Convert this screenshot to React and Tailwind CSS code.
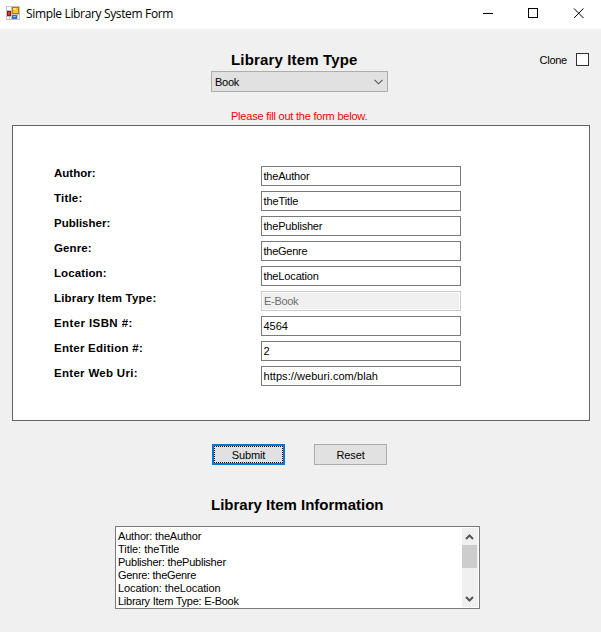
import React from "react";

const fields = [
  { label: "Author:", value: "theAuthor", lt: "tracking-[0px]", vt: "tracking-[-0.2px]" },
  { label: "Title:", value: "theTitle", lt: "tracking-[0.2px]", vt: "tracking-[-0.1px]" },
  { label: "Publisher:", value: "thePublisher", lt: "tracking-[0px]", vt: "tracking-[-0.2px]" },
  { label: "Genre:", value: "theGenre", lt: "tracking-[0.1px]", vt: "tracking-[-0.25px]" },
  { label: "Location:", value: "theLocation", lt: "tracking-[0.1px]", vt: "tracking-[-0.15px]" },
  { label: "Library Item Type:", value: "E-Book", lt: "tracking-[0.2px]", vt: "tracking-[-0.3px]", disabled: true },
  { label: "Enter ISBN #:", value: "4564", lt: "tracking-[0.4px]", vt: "tracking-[0px]" },
  { label: "Enter Edition #:", value: "2", lt: "tracking-[0.25px]", vt: "tracking-[0px]" },
  { label: "Enter Web Uri:", value: "https://weburi.com/blah", lt: "tracking-[0.3px]", vt: "tracking-[0.06px]" },
];

const info = [
  { text: "Author: theAuthor", t: "tracking-[-0.18px]" },
  { text: "Title: theTitle", t: "tracking-[-0.05px]" },
  { text: "Publisher: thePublisher", t: "tracking-[-0.23px]" },
  { text: "Genre: theGenre", t: "tracking-[-0.3px]" },
  { text: "Location: theLocation", t: "tracking-[-0.1px]" },
  { text: "Library Item Type: E-Book", t: "tracking-[-0.25px]" },
];

function FormIcon() {
  return (
    <svg width="14" height="14" viewBox="0 0 14 14" shapeRendering="crispEdges">
      <rect width="14" height="14" fill="#c3c3c3" />
      <rect x="1" y="1" width="4" height="3" fill="#fff" />
      <rect x="1" y="11" width="2" height="2" fill="#fff" />
      <rect x="4" y="11" width="1" height="2" fill="#fff" />
      <rect x="12" y="9" width="1" height="4" fill="#fff" />
      <rect x="1" y="5" width="4" height="5" fill="#8c1414" />
      <rect x="2" y="6" width="2" height="3" fill="#d8402c" />
      <rect x="6" y="1" width="7" height="7" fill="#a87a10" />
      <rect x="7" y="2" width="5" height="5" fill="#f8c828" />
      <rect x="7" y="2" width="3" height="2" fill="#fde98a" />
      <rect x="6" y="9" width="5" height="4" fill="#3c6cc8" />
      <rect x="7" y="10" width="3" height="1" fill="#8cb8f8" />
    </svg>
  );
}

export default function App() {
  return (
    <div className="flex h-[632px] w-[601px] flex-col overflow-hidden bg-[#f0f0f0] font-['Liberation_Sans',Arial,sans-serif] text-[11px] leading-[14px] whitespace-pre text-black">
      <header className="flex h-[29px] shrink-0 items-start bg-white pl-[6px]">
        <div className="mt-[6px]"><FormIcon /></div>
        <h1 className="mt-[6px] ml-[6px] flex-1 font-['Open_Sans',sans-serif] text-[12px] leading-[16px] tracking-[-0.35px]">Simple Library System Form</h1>
        <svg width="120" height="29" viewBox="0 0 120 29" fill="none" stroke="#000">
          <path d="M2 13.5h10" />
          <rect x="47.5" y="8.5" width="9" height="9" />
          <path d="M93 8.5l9.5 9.5M102.5 8.5L93 18" />
        </svg>
      </header>

      <section className="grid h-[96px] shrink-0 grid-cols-[211px_177px_1fr]">
        <div />
        <div className="flex flex-col">
          <h2 className="mt-[23px] ml-[20px] h-[19px] text-[15px] leading-[16px] font-bold tracking-[0.15px]">Library Item Type</h2>
          <div className="flex h-[21px] shrink-0 items-center justify-between border border-[#adadad] bg-[#e1e1e1] pr-[4px] pl-[3px]">
            <span className="tracking-[-0.25px]">Book</span>
            <svg width="9" height="6" viewBox="0 0 9 6" fill="none" stroke="#555" strokeWidth="1.1"><path d="M.5 .8L4.5 4.8L8.5 .8" /></svg>
          </div>
          <p className="mt-[17px] ml-[20px] tracking-[-0.22px] text-[#ff0000]">Please fill out the form below.</p>
        </div>
        <div className="mt-[24px] flex h-[13px] justify-end gap-[9px] pr-[12px]">
          <span className="tracking-[-0.25px]">Clone</span>
          <div className="size-[13px] border border-[#333] bg-white" />
        </div>
      </section>

      <main className="mr-[11px] ml-[12px] flex h-[296px] shrink-0 flex-col gap-[5px] border border-[#646464] bg-white pt-[40px] pl-[41px]">
        {fields.map((f) => (
          <div key={f.label} className="flex h-[20px]">
            <span className={"w-[207px] text-[11.5px] font-bold " + f.lt}>{f.label}</span>
            <div className={"flex h-[20px] w-[200px] items-center border " + (f.disabled ? "border-[#ccc] bg-white p-px" : "border-[#7a7a7a] pl-[1.5px]")}>
              <span className={f.vt + (f.disabled ? " h-full w-full bg-[#f0f0f0] pl-[1px] leading-[16px] text-[#6d6d6d]" : "")}>{f.value}</span>
            </div>
          </div>
        ))}
      </main>

      <div className="mt-[23px] ml-[212px] flex shrink-0 gap-[29px]">
        <div className="h-[21px] w-[73px] border-2 border-[#0078d7] bg-[#e1e1e1]">
          <div className="flex h-full items-center justify-center border border-dotted border-black tracking-[-0.1px]">Submit</div>
        </div>
        <div className="flex h-[21px] w-[73px] items-center justify-center border border-[#adadad] bg-[#e1e1e1] tracking-[-0.1px]">Reset</div>
      </div>

      <h2 className="mt-[32px] ml-[211px] h-[29px] shrink-0 text-[15px] leading-[16px] font-bold">Library Item Information</h2>

      <div className="ml-[115px] flex h-[83px] w-[365px] shrink-0 justify-between border border-[#7a7a7a] bg-white p-px">
        <div className="h-[79px] overflow-hidden pt-[2px] pl-[1px]">
          {info.map((l) => (
            <p key={l.text} className={"h-[13px] leading-[13px] " + l.t}>{l.text}</p>
          ))}
        </div>
        <div className="flex w-[16px] flex-col bg-[#f0f0f0]">
          <svg width="15" height="17" viewBox="0 0 15 17" fill="none" stroke="#555" strokeWidth="2"><path d="M4 11L7.5 7.5L11 11" /></svg>
          <div className="h-[23px] w-[15px] bg-[#cdcdcd]" />
          <div className="flex-1" />
          <svg width="15" height="17" viewBox="0 0 15 17" fill="none" stroke="#555" strokeWidth="2"><path d="M4 7L7.5 10.5L11 7" /></svg>
        </div>
      </div>
    </div>
  );
}
